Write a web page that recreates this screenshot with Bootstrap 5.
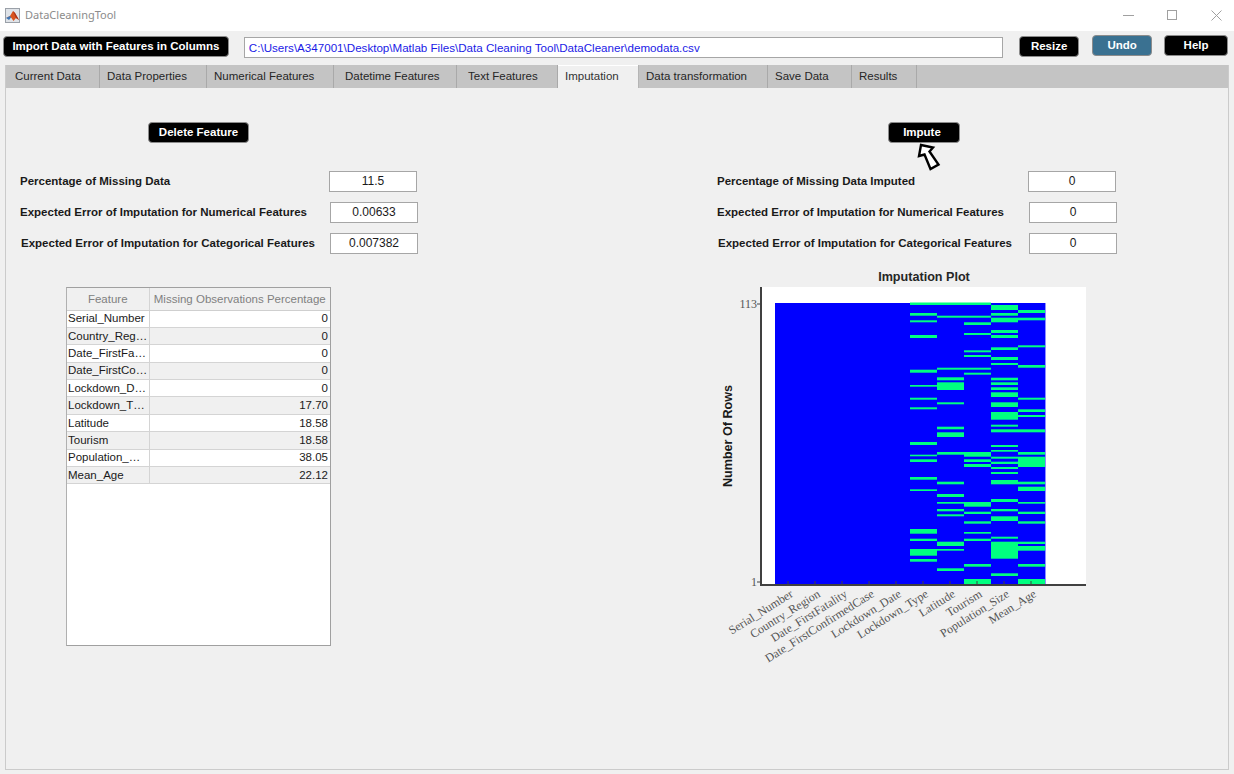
<!DOCTYPE html>
<html lang="en">
<head>
  <meta charset="UTF-8" />
  <meta name="viewport" content="width=device-width, initial-scale=1.0" />
  <title>DataCleaningTool</title>
  <link href="https://cdn.jsdelivr.net/npm/bootstrap@5.3.0/dist/css/bootstrap.min.css" rel="stylesheet" />
  <style>
    body { background: #f0f0f0; font-family: "Liberation Sans", Arial, sans-serif; font-size: 11.5px; color: #1a1a1a; height: 774px; overflow: hidden; }
    .title-bar { height: 31px; background: #fff; padding-left: 5px; }
    .title-text { font-family: "Noto Sans", sans-serif; font-size: 11px; color: #8c8c8c; margin-left: 5px; }
    .win-ctl { margin-right: 12px; gap: 33px; }
    .tool-bar { height: 34px; padding: 4px 6px 0 3px; }
    .blk-btn { background: #000; color: #fff; font-weight: 700; font-size: 11.5px; line-height: 1; height: 21px; padding: 0; border: 1px solid #8c8c8c; border-radius: 4px; }
    .blk-btn:hover { background: #000; color: #fff; }
    .btn-import { width: 226px; margin-top: 1px; }
    .btn-resize { width: 60px; margin-left: 16px; margin-top: 1px; }
    .btn-undo { width: 60px; margin-left: 13px; background: #3a7191; }
    .btn-undo:hover { background: #3a7191; }
    .btn-help { width: 64px; margin-left: 12px; }
    .path-box { width: 760px; height: 21px; margin-left: 15px; margin-top: 2px; background: #fff; border: 1px solid #a6a6a6; color: #1a1ae6; padding: 0 4px; font-size: 11.6px; line-height: 19px; }
    .tab-panel { margin-left: 5px; width: 1224px; height: 705px; border: 1px solid #cbcbcb; border-top: 0; }
    .tab-strip { height: 23px; background: #c4c4c4; flex-wrap: nowrap; }
    .tab-strip .nav-link { height: 23px; padding: 0 0 0 7px; font-size: 11.5px; line-height: 22px; color: #262626; border-right: 1px solid #a9a9a9; border-radius: 0; background: transparent; }
    .tab-strip .nav-link.active { background: #f0f0f0; color: #333; border-right: 1px solid #b5b5b5; box-shadow: inset 0 1px 0 #fff; }
    .tab-strip .nav-item:nth-child(1) .nav-link { width: 94px; padding-left: 9px; }
    .tab-strip .nav-item:nth-child(2) .nav-link { width: 107px; }
    .tab-strip .nav-item:nth-child(3) .nav-link { width: 127px; }
    .tab-strip .nav-item:nth-child(4) .nav-link { width: 123px; padding-left: 11px; }
    .tab-strip .nav-item:nth-child(5) .nav-link { width: 101px; padding-left: 11px; }
    .tab-strip .nav-item:nth-child(6) .nav-link { width: 81px; }
    .tab-strip .nav-item:nth-child(7) .nav-link { width: 129px; }
    .tab-strip .nav-item:nth-child(8) .nav-link { width: 84px; }
    .tab-strip .nav-item:nth-child(9) .nav-link { width: 65px; }
    .left-side { width: 684px; padding-top: 34px; }
    .right-side { width: 538px; padding-top: 34px; }
    .btn-delete { width: 101px; margin-left: 142px; display: block; }
    .impute-wrap { margin-left: 198px; width: 72px; }
    .btn-impute { width: 72px; display: block; padding-right: 4px; }
    .hand-arrow { position: absolute; left: 29px; top: 20px; }
    .field-list { margin-top: 28px; gap: 10px; }
    .left-side .field-list { padding-left: 14px; }
    .right-side .field-list { padding-left: 27px; }
    .field-row { height: 21px; }
    .field-lbl { width: 310px; font-weight: 700; font-size: 11.5px; white-space: nowrap; }
    .right-side .field-lbl { width: 312px; }
    .field-row:first-child .field-lbl { width: 309px; }
    .right-side .field-row:first-child .field-lbl { width: 311px; }
    .field-row:last-child .field-lbl { padding-left: 1px; }
    .field-val { width: 88px; height: 21px; background: #fff; border: 1px solid #a6a6a6; text-align: center; line-height: 19px; font-size: 12px; }
    .miss-wrap { width: 265px; height: 359px; margin: 33px 0 0 60px; background: #fff; border: 1px solid #a0a0a0; border-left-color: #b0b0b0; }
    .miss-tbl { table-layout: fixed; width: 263px; font-size: 11.5px; margin: 0; color: #1a1a1a; }
    .miss-tbl th, .miss-tbl td { height: 17.4px; padding: 0 1px; line-height: 15px; border: 0; border-bottom: 1px solid #d4d4d4; white-space: nowrap; overflow: hidden; background: transparent; box-shadow: none; color: inherit; vertical-align: middle; }
    .miss-tbl th { height: 22px; padding-top: 2px; font-weight: 400; color: #808080; background: #f0f0f0; text-align: center; border-bottom: 1px solid #cfcfcf; }
    .miss-tbl td:first-child, .miss-tbl th:first-child { border-right: 1px solid #d4d4d4; }
    .miss-tbl td:last-child { text-align: right; padding-right: 2px; }
    .miss-tbl tbody tr:nth-child(even) td { background: #f0f0f0; }
    .plot-svg { display: block; margin: 11px 0 0 10px; }
    .plot-ttl { font: 700 12.6px "Liberation Sans", sans-serif; fill: #262626; }
    .plot-yl { font: 700 12.6px "Liberation Sans", sans-serif; fill: #1a1a1a; }
    .plot-tick { font: 12px "Liberation Serif", serif; fill: #555; }
  </style>
</head>
<body>
  <div class="title-bar d-flex align-items-center">
    <svg width="15" height="15" viewBox="0 0 15 15">
      <rect x="0.5" y="0.5" width="14" height="14" fill="#dfe3e8" stroke="#9aa0a8" />
      <path d="M1 10 L5 8 L8 3 L10 5 L14 12 L11 10 L8.5 13 L6 9.5 Z" fill="#d9531e" />
      <path d="M1 10 L5 8 L6 9.5 L4 12 Z" fill="#3f76b5" />
      <path d="M8 3 L10 5 L14 12 L11 10 Z" fill="#a8321a" />
    </svg>
    <span class="title-text">DataCleaningTool</span>
    <div class="win-ctl d-flex align-items-center ms-auto">
      <svg width="11" height="11" viewBox="0 0 11 11"><path d="M0 5.5 H11" stroke="#a0a0a0" /></svg>
      <svg width="11" height="11" viewBox="0 0 11 11"><rect x="0.5" y="0.5" width="9" height="9" fill="none" stroke="#a0a0a0" /></svg>
      <svg width="11" height="11" viewBox="0 0 11 11"><path d="M0.5 0.5 L10.5 10.5 M10.5 0.5 L0.5 10.5" stroke="#a0a0a0" /></svg>
    </div>
  </div>

  <div class="tool-bar d-flex align-items-start">
    <button class="btn blk-btn btn-import" type="button">Import Data with Features in Columns</button>
    <div class="path-box">C:\Users\A347001\Desktop\Matlab Files\Data Cleaning Tool\DataCleaner\demodata.csv</div>
    <button class="btn blk-btn btn-resize" type="button">Resize</button>
    <button class="btn blk-btn btn-undo" type="button">Undo</button>
    <button class="btn blk-btn btn-help" type="button">Help</button>
  </div>

  <div class="tab-panel">
    <ul class="nav tab-strip">
      <li class="nav-item"><a class="nav-link" href="#">Current Data</a></li>
      <li class="nav-item"><a class="nav-link" href="#">Data Properties</a></li>
      <li class="nav-item"><a class="nav-link" href="#">Numerical Features</a></li>
      <li class="nav-item"><a class="nav-link" href="#">Datetime Features</a></li>
      <li class="nav-item"><a class="nav-link" href="#">Text Features</a></li>
      <li class="nav-item"><a class="nav-link active" href="#">Imputation</a></li>
      <li class="nav-item"><a class="nav-link" href="#">Data transformation</a></li>
      <li class="nav-item"><a class="nav-link" href="#">Save Data</a></li>
      <li class="nav-item"><a class="nav-link" href="#">Results</a></li>
    </ul>

    <div class="d-flex">
      <div class="left-side">
        <button class="btn blk-btn btn-delete" type="button">Delete Feature</button>
        <div class="field-list d-flex flex-column">
          <div class="field-row d-flex align-items-center"><div class="field-lbl">Percentage of Missing Data</div><div class="field-val">11.5</div></div>
          <div class="field-row d-flex align-items-center"><div class="field-lbl">Expected Error of Imputation for Numerical Features</div><div class="field-val">0.00633</div></div>
          <div class="field-row d-flex align-items-center"><div class="field-lbl">Expected Error of Imputation for Categorical Features</div><div class="field-val">0.007382</div></div>
        </div>
        <div class="miss-wrap">
          <table class="table miss-tbl">
            <colgroup><col width="82" /><col /></colgroup>
            <thead><tr><th>Feature</th><th>Missing Observations Percentage</th></tr></thead>
            <tbody id="miss-rows"></tbody>
          </table>
        </div>
      </div>

      <div class="right-side">
        <div class="impute-wrap position-relative">
          <button class="btn blk-btn btn-impute" type="button">Impute</button>
          <svg class="hand-arrow" width="26" height="30" viewBox="0 0 26 30">
            <path d="M4 3 L16 5.5 L12.5 9.5 L21.5 22.5 L13.5 27 L7.5 12.5 L2 14 Z" fill="#fff" stroke="#000" stroke-width="2.4" stroke-linejoin="miter" />
          </svg>
        </div>
        <div class="field-list d-flex flex-column">
          <div class="field-row d-flex align-items-center"><div class="field-lbl">Percentage of Missing Data Imputed</div><div class="field-val">0</div></div>
          <div class="field-row d-flex align-items-center"><div class="field-lbl">Expected Error of Imputation for Numerical Features</div><div class="field-val">0</div></div>
          <div class="field-row d-flex align-items-center"><div class="field-lbl">Expected Error of Imputation for Categorical Features</div><div class="field-val">0</div></div>
        </div>
        <svg class="plot-svg" id="plot" width="400" height="410" viewBox="700 265 400 410">
          <text class="plot-ttl" x="924" y="281" text-anchor="middle">Imputation Plot</text>
          <rect x="762" y="287" width="324" height="298" fill="#fff" />
          <g id="heat"></g>
          <path d="M761 287 V585 H1086" fill="none" stroke="#404040" stroke-width="2" />
          <text class="plot-tick" x="757" y="308" text-anchor="end">113</text>
          <text class="plot-tick" x="757" y="586" text-anchor="end">1</text>
          <path d="M757 304 H761 M757 582 H761" stroke="#404040" />
          <text class="plot-yl" text-anchor="middle" transform="translate(732 436) rotate(-90)">Number Of Rows</text>
          <g id="xticks"></g>
        </svg>
      </div>
    </div>
  </div>

  <script>
    const rows = [
      ["Serial_Number", "0"], ["Country_Reg…", "0"], ["Date_FirstFa…", "0"], ["Date_FirstCo…", "0"], ["Lockdown_D…", "0"],
      ["Lockdown_T…", "17.70"], ["Latitude", "18.58"], ["Tourism", "18.58"], ["Population_…", "38.05"], ["Mean_Age", "22.12"]
    ];
    document.getElementById("miss-rows").innerHTML = rows.map(r => `<tr><td>${r[0]}</td><td>${r[1]}</td></tr>`).join("");

    // missing-value bands per column, in page y
    const bands = {
      910: [[302.5,305],[313,315.7],[320.3,322.3],[335,338],[369.7,372.7],[385,386.7],[397.7,399.7],[407.3,409.3],[442,445],[454.7,456.3],[459.3,462],[477,479.7],[489.3,491],[529,533.7],[538.7,541],[549,555.7],[559,561.7]],
      937: [[302.5,305],[315.7,317.7],[367.7,369.7],[377.3,380.3],[382.3,390],[402.3,404.3],[426.7,429.3],[432.3,437],[452,454.7],[481.7,484.3],[494,497],[502,503.7],[509,511.3],[514.3,516.3],[541.7,546],[549,550.7],[568.3,571]],
      964: [[302.5,305],[315.7,317.7],[322.3,325],[333,335],[350.3,352.3],[355,357],[367.7,369.7],[372.7,374.7],[452,456.7],[459.3,462],[464,467],[502,506.7],[511.7,514],[521.3,523.7],[532,533.7],[538.7,541],[564,566.7],[579,584]],
      991: [[305,310],[313,315.7],[317.7,322.3],[330,333],[335,338],[347.3,350],[357,360],[363,365],[377.7,380.3],[382.3,385],[387.3,390],[392.3,397],[402.3,407],[412,419.7],[424.7,426.7],[429.3,432.3],[445,447],[450,451.7],[456.7,458.7],[461.7,464],[467,469],[472,474],[480,484.3],[499,502],[509,511.3],[516.3,521],[536.7,538.7],[541.7,558.7],[573.3,576]],
      1018: [[310,313],[317.7,320.3],[345.3,347.3],[365,367.7],[397.7,399.7],[409.3,412],[415,417],[429.3,432.3],[452,454.7],[456.7,467],[481.7,484.3],[486.7,491],[502,503.7],[511.7,514],[521.3,523.7],[541.7,544],[546,550.7],[564,566.7],[579,584]]
    };
    let heat = '<rect x="775" y="303" width="270" height="281" fill="#0000ff" />';
    Object.keys(bands).forEach(x => {
      bands[x].forEach(b => {
        heat += `<rect x="${x}" y="${b[0]}" width="27" height="${(b[1] - b[0]).toFixed(1)}" fill="#00ff80" />`;
      });
    });
    heat += '<path d="M1045.5 303 V584" stroke="#8f8fff" />';
    document.getElementById("heat").innerHTML = heat;

    const names = ["Serial_Number", "Country_Region", "Date_FirstFatality", "Date_FirstConfirmedCase", "Lockdown_Date", "Lockdown_Type", "Latitude", "Tourism", "Population_Size", "Mean_Age"];
    let ticks = "";
    names.forEach((n, i) => {
      const x = 788 + i * 27;
      ticks += `<path d="M${x} 581 V584" stroke="#404040" />`;
      ticks += `<text class="plot-tick" text-anchor="end" transform="translate(${x + 6} 596) rotate(-32)">${n}</text>`;
    });
    document.getElementById("xticks").innerHTML = ticks;
  </script>
  <script src="https://cdn.jsdelivr.net/npm/bootstrap@5.3.0/dist/js/bootstrap.bundle.min.js"></script>
</body>
</html>
